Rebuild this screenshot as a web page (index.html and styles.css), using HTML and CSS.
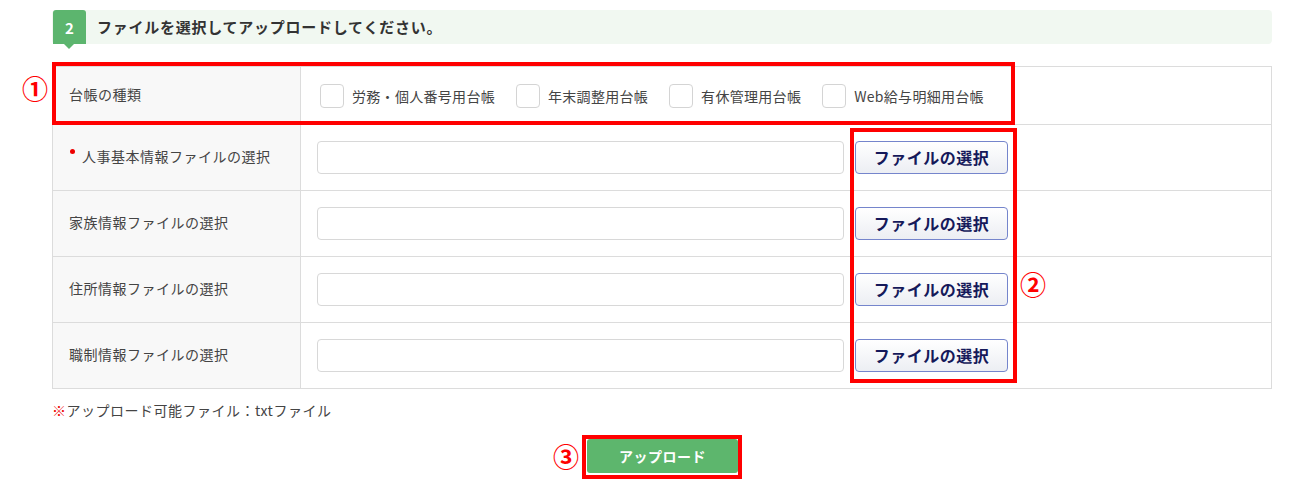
FILE: index.html
```html
<!DOCTYPE html>
<html lang="ja">
<head>
<meta charset="utf-8">
<link rel="stylesheet" href="styles.css">
</head>
<body>
<div class="page">
  <div class="step">
    <div class="badge">2</div>
    <div class="step-title">ファイルを選択してアップロードしてください。</div>
  </div>

  <div class="table">
    <div class="row row-kind">
      <div class="th">台帳の種類</div>
      <div class="td checks">
        <label class="check"><span class="box"></span>労務・個人番号用台帳</label>
        <label class="check"><span class="box"></span>年末調整用台帳</label>
        <label class="check"><span class="box"></span>有休管理用台帳</label>
        <label class="check"><span class="box"></span>Web給与明細用台帳</label>
      </div>
    </div>
    <div class="row">
      <div class="th req"><span class="dot"></span>人事基本情報ファイルの選択</div>
      <div class="td files"><span class="input"></span><button class="pick">ファイルの選択</button></div>
    </div>
    <div class="row">
      <div class="th">家族情報ファイルの選択</div>
      <div class="td files"><span class="input"></span><button class="pick">ファイルの選択</button></div>
    </div>
    <div class="row">
      <div class="th">住所情報ファイルの選択</div>
      <div class="td files"><span class="input"></span><button class="pick">ファイルの選択</button></div>
    </div>
    <div class="row">
      <div class="th">職制情報ファイルの選択</div>
      <div class="td files"><span class="input"></span><button class="pick">ファイルの選択</button></div>
    </div>
  </div>

  <p class="note"><span class="mark">※</span>アップロード可能ファイル：txtファイル</p>

  <div class="actions">
    <button class="upload">アップロード</button>
  </div>

  <div class="anno anno-box1"></div>
  <div class="anno anno-box2"></div>
  <div class="anno anno-box3"></div>
  <div class="num num1">①</div>
  <div class="num num2">②</div>
  <div class="num num3">③</div>
</div>
</body>
</html>
```
FILE: styles.css
```css
* { box-sizing: border-box; }
html, body { margin: 0; padding: 0; background: #fff; }
body {
  font-family: "Noto Sans CJK JP", "Noto Sans", sans-serif;
  color: #333;
  font-size: 14px;
}
.page {
  position: relative;
  width: 1302px;
  height: 499px;
  padding: 10px 30px 0 52px;
}
.step {
  display: flex;
  align-items: center;
  height: 34px;
  background: #f1f8f1;
  border-radius: 4px;
}
.badge {
  position: relative;
  width: 33px;
  height: 34px;
  margin-left: 1px;
  background: #5cb56e;
  color: #fff;
  font-weight: bold;
  font-size: 15px;
  display: flex;
  align-items: center;
  justify-content: center;
  border-radius: 3px 3px 0 0;
}
.badge::after {
  content: "";
  position: absolute;
  left: 11px;
  bottom: -5px;
  border-left: 5px solid transparent;
  border-right: 5px solid transparent;
  border-top: 5px solid #5cb56e;
}
.step-title {
  margin-left: 11px;
  margin-top: -2px;
  font-size: 15px;
  font-weight: bold;
  color: #333;
  letter-spacing: 0.75px;
}
.table {
  margin-top: 22px;
  width: 1220px;
  border: 1px solid #dcdcdc;
}
.row {
  display: flex;
  height: 66px;
  border-top: 1px solid #dcdcdc;
}
.row:first-child { border-top: 0; height: 57px; }
.th {
  width: 248px;
  background: #f8f8f8;
  border-right: 1px solid #dcdcdc;
  display: flex;
  align-items: center;
  padding-left: 16px;
  padding-bottom: 3px;
  color: #444;
  letter-spacing: 0.5px;
}
.th.req { padding-left: 17px; }
.dot {
  width: 5px;
  height: 5px;
  border-radius: 50%;
  background: #e00;
  margin-right: 7px;
  margin-top: -9px;
}
.td { flex: 1; display: flex; align-items: center; }
.checks { padding-left: 19px; }
.check {
  display: flex;
  align-items: center;
  margin-right: 21px;
  color: #444;
  letter-spacing: 0.3px;
}
.box {
  width: 24px;
  height: 24px;
  border: 1px solid #d4d4d4;
  border-radius: 4px;
  background: #fff;
  margin-right: 8px;
}
.files { padding-left: 16px; }
.input {
  width: 527px;
  height: 33px;
  border: 1px solid #d8d8d8;
  border-radius: 4px;
  background: #fff;
}
.pick {
  margin-left: 11px;
  width: 153px;
  height: 33px;
  border: 1px solid #7585cc;
  border-radius: 4px;
  background: linear-gradient(#ffffff, #eceef3);
  font-family: inherit;
  font-size: 16px;
  font-weight: bold;
  color: #15195a;
  padding: 0 0 2px;
  letter-spacing: 0.5px;
}
.note {
  margin: 11px 0 0;
  line-height: 20px;
  color: #444;
  letter-spacing: 0.5px;
}
.mark { color: #e00; }
.actions {
  display: flex;
  justify-content: center;
  margin-top: 19px;
  padding-left: 1px;
}
.upload {
  width: 151px;
  height: 34px;
  border: 0;
  border-radius: 3px;
  background: #5db66d;
  color: #fff;
  font-family: inherit;
  font-size: 14px;
  font-weight: bold;
  letter-spacing: 0.5px;
}
.anno {
  position: absolute;
  border: 4px solid #f00;
}
.anno-box1 { left: 52px; top: 62px; width: 963px; height: 63px; }
.anno-box2 { left: 850px; top: 128px; width: 167px; height: 255px; }
.anno-box3 { left: 582px; top: 435px; width: 160px; height: 44px; }
.num {
  position: absolute;
  color: #f00;
  font-size: 26px;
  line-height: 26px;
  font-weight: bold;
}
.num1 { left: 22px; top: 75px; }
.num2 { left: 1020px; top: 271px; }
.num3 { left: 553px; top: 443px; }
```
